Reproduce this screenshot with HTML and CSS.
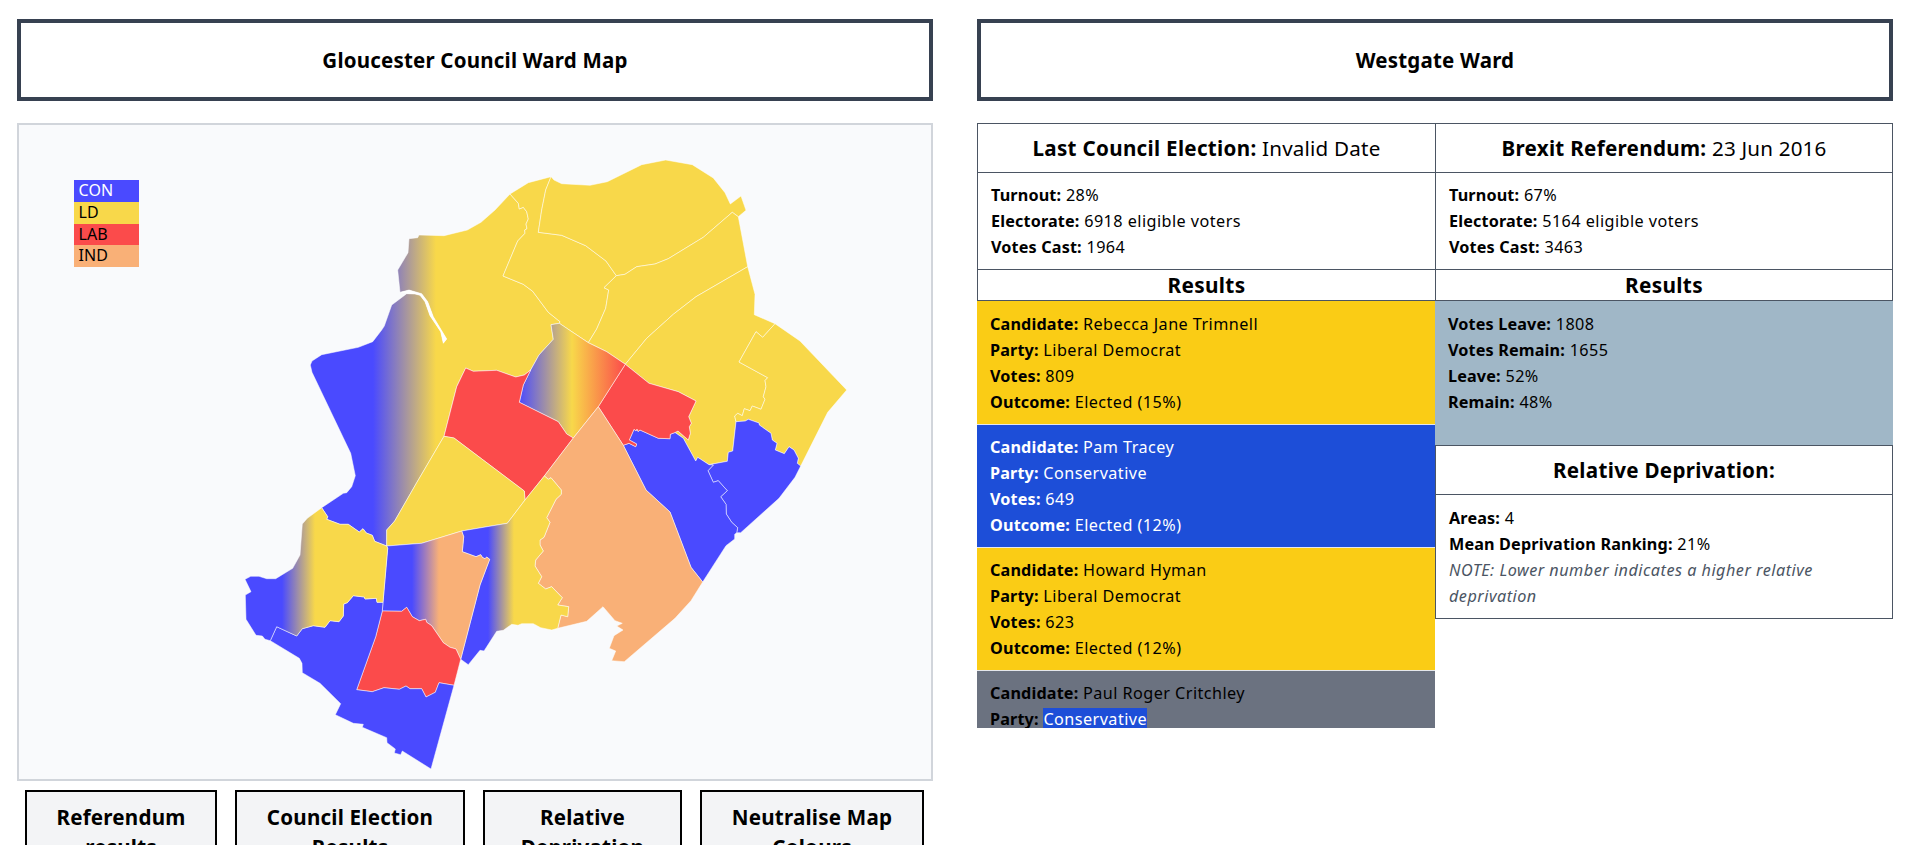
FILE: index.html
```html
<!DOCTYPE html>
<html lang="en">
<head>
<meta charset="utf-8">
<title>Gloucester Council Ward Map</title>
<link rel="stylesheet" href="styles.css">
</head>
<body>
<main class="page">
  <section class="column">
    <h1 class="title">Gloucester Council Ward Map</h1>
    <div class="map-panel">
      <svg class="map" viewBox="19 125 912 654" width="912" height="654">
        <defs>
          <linearGradient id="westgate" gradientUnits="userSpaceOnUse" x1="373" y1="0" x2="436" y2="0"><stop offset="0" stop-color="#4a4aff"/><stop offset="1" stop-color="#f8d84a"/></linearGradient>
          <linearGradient id="central" gradientUnits="userSpaceOnUse" x1="519" y1="0" x2="625" y2="0"><stop offset="0" stop-color="#4a4aff"/><stop offset=".5" stop-color="#f8d84a"/><stop offset="1" stop-color="#fb4b4b"/></linearGradient>
          <linearGradient id="west" gradientUnits="userSpaceOnUse" x1="282" y1="0" x2="315" y2="0"><stop offset="0" stop-color="#4a4aff"/><stop offset="1" stop-color="#f8d84a"/></linearGradient>
          <linearGradient id="south" gradientUnits="userSpaceOnUse" x1="412" y1="0" x2="439" y2="0"><stop offset="0" stop-color="#4a4aff"/><stop offset="1" stop-color="#f9b077"/></linearGradient>
          <linearGradient id="mid" gradientUnits="userSpaceOnUse" x1="488" y1="0" x2="514" y2="0"><stop offset="0" stop-color="#4a4aff"/><stop offset="1" stop-color="#f8d84a"/></linearGradient>
        </defs>
        <g class="wards">
          <path fill="url(#westgate)" d="M510 194L495 210 481 222.3 467.3 230 444 235.7 419 235 417.7 237.7 409 238.7 408 252.7 397.7 270 400 292.3 409 290 421.7 293.7 427.7 301.7 433.3 316.7 441.7 330.7 446.7 339 443.3 343.3 440.7 331.7 430 315.7 425 301.7 420 295.3 415 294 406.7 293.7 391.7 305 384.3 326 381.7 330 372.7 341.7 358.3 347.3 321.7 354.7 312 361 310.3 365 312 372.3 350.7 453.3 355.3 475.7 351.7 486.7 346.7 492.7 343.3 493.3 321.7 507.7 327.7 516.7 326.7 519.3 340 524.3 348.3 524.3 359.3 532 363 528.7 366.3 533 372.3 535.3 374.7 541.3 386.7 546 386.7 530 394.7 521 416.7 482.7 444 436.3 456.7 386.7 465.7 368 473.3 371.3 496.7 370.3 515.7 377 524.3 375 530.7 370 539 355 553.3 339.3 551 324.7 559.3 323.3 560 321.7 548.3 312.3 532.7 291.3 523.3 284.3 503 276 517.7 241 525 233.3 524.7 230 527 228.7 526 224 528.3 219 526.7 211.7 523.3 207.3 519.3 209 518.3 203.3Z"/>
          <path fill="#f8d84a" d="M510 194L528.3 182.7 551 176.7 545.7 190 541.7 210 538.3 232.3 561.7 235.3 585.7 245.7 606 261 616.3 275.7 604 287.7 608.7 290 605.7 308.3 596.7 329 588.3 342.7 559.3 323.3 560 321.7 548.3 312.3 532.7 291.3 523.3 284.3 503 276 517.7 241 525 233.3 524.7 230 527 228.7 526 224 528.3 219 526.7 211.7 523.3 207.3 519.3 209 518.3 203.3Z"/>
          <path fill="#f8d84a" d="M551 176.7L554 180 561.7 183.7 590 185.3 607.3 181.7 641.7 164.7 665.7 160 692.3 164.7 713.3 178 725 192.7 730.3 204 741 196 746 210.3 738.3 216.7 732.3 212.3 703.3 237.3 668.3 258.7 655 264 636.7 266.7 625 274.3 616.3 275.7 606 261 585.7 245.7 561.7 235.3 538.3 232.3 541.7 210 545.7 190Z"/>
          <path fill="#f8d84a" d="M732.3 212.3L738.3 216.7 747.7 266.7 696 296.7 673.3 314.3 646.7 338.3 625.3 364.3 606.7 351.7 588.3 342.7 596.7 329 605.7 308.3 608.7 290 604 287.7 616.3 275.7 625 274.3 636.7 266.7 655 264 668.3 258.7 703.3 237.3Z"/>
          <path fill="#f8d84a" d="M747.7 266.7L755 294.3 754.3 314.7 775 323.7 762.7 337.3 756 331.7 739 362 767.7 377.7 765 380.5 766 386.7 763.3 396.7 765 399.3 761 409.3 752.3 406 750 410.7 744.3 408.7 742.3 415.7 737.7 413.3 734.7 416 736 421.7 732.7 451 728.3 452.3 727.3 461.3 709 464.7 697.7 457.3 695.7 461 683.3 438.3 675 432.5 678 431 688.3 440 690.3 433.3 689.3 426.7 691.3 423.3 688.7 416.7 696 401 678.3 391.7 649 383.3 625.3 364.3 646.7 338.3 673.3 314.3 696 296.7Z"/>
          <path fill="#f8d84a" d="M775 323.7L800 341 846.7 390 827.7 412.3 800.7 466 797.3 463.3 798.3 458.3 794 450 789 446.7 784.3 453.7 775.3 450 777 443.3 772.3 440 771 433.3 759.3 425 759 423 748.3 419.3 745.3 421 736 421.7 734.7 416 737.7 413.3 742.3 415.7 744.3 408.7 750 410.7 752.3 406 761 409.3 765 399.3 763.3 396.7 766 386.7 765 380.5 767.7 377.7 739 362 756 331.7 762.7 337.3Z"/>
          <path fill="#4a4aff" d="M736 421.7L745.3 421 748.3 419.3 759 423 759.3 425 771 433.3 772.3 440 777 443.3 775.3 450 784.3 453.7 789 446.7 794 450 798.3 458.3 797.3 463.3 800.7 466 795 477.3 779 498.3 740.7 532.7 736.7 532.7 737.7 527.7 731.7 522.3 726.3 514 726 504.3 720.7 496.7 727.3 490.7 718.3 480.7 713.3 482.3 708 470.7 713.3 465 709 464.7 727.3 461.3 728.3 452.3 732.7 451Z"/>
          <path fill="#4a4aff" d="M709 464.7L713.3 465 708 470.7 713.3 482.3 718.3 480.7 727.3 490.7 720.7 496.7 726 504.3 726.3 514 731.7 522.3 737.7 527.7 736.7 532.7 734.7 534.3 734.7 539 726 545.7 702.7 582 691 567.3 670 512 646 490 623.3 445.3 629 443.3 635.7 446.7 636.7 444 629.3 440 634 429.3 636 431 637 429 638 431.5 640 430 658.3 438.3 670 438.7 670.3 434.3 675 432.5 683.3 438.3 695.7 461 697.7 457.3Z"/>
          <path fill="#fb4b4b" d="M625.3 364.3L649 383.3 678.3 391.7 696 401 688.7 416.7 691.3 423.3 689.3 426.7 690.3 433.3 688.3 440 678 431 675 432.5 670.3 434.3 670 438.7 658.3 438.3 640 430 638 431.5 637 429 636 431 634 429.3 629.3 440 636.7 444 635.7 446.7 629 443.3 623.3 445.3 598.3 406.7Z"/>
          <path fill="url(#central)" d="M551 324.7L559.3 323.3 588.3 342.7 606.7 351.7 625.3 364.3 598.3 406.7 573.3 438 566.7 434 558.3 421.7 519.3 402.3 523.3 385 530.7 370 539 355 553.3 339.3Z"/>
          <path fill="#fb4b4b" d="M444 436.3L456.7 386.7 465.7 368 473.3 371.3 496.7 370.3 515.7 377 524.3 375 530.7 370 523.3 385 519.3 402.3 558.3 421.7 566.7 434 573.3 438 544.3 476 525 500 524.3 491 454 438Z"/>
          <path fill="#f8d84a" d="M444 436.3L454 438 524.3 491 525 500 507.3 523.3 461.7 531 421.7 543.3 386.7 546 386.7 530 394.7 521 416.7 482.7Z"/>
          <path fill="#f9b077" d="M598.3 406.7L623.3 445.3 646 490 670 512 691 567.3 702.7 582 691 600.7 675 618.3 624.3 661.7 611.7 660.7 615.7 651 609.3 648.3 614 635.7 623 630 616.7 626 622.3 623.3 615 620.7 603 606.7 586.7 621.3 557.7 628.3 561 615 567.7 616.7 568.7 606.7 557.7 605 562.3 597.7 551.7 586.7 545.7 589 538.3 583.3 541.7 576.7 535 566 535.7 560 543.3 551 540 545 540 540 544 537.3 550 522.3 546.7 517.7 556 499.3 561.3 494.3 561.3 490 551 477.7 548.3 479.3 544.3 476 573.3 438Z"/>
          <path fill="url(#mid)" d="M544.3 476L548.3 479.3 551 477.7 561.3 490 561.3 494.3 556 499.3 546.7 517.7 550 522.3 544 537.3 540 540 540 545 543.3 551 535.7 560 535 566 541.7 576.7 538.3 583.3 545.7 589 551.7 586.7 562.3 597.7 557.7 605 568.7 606.7 567.7 616.7 561 615 557.7 628.3 551.7 630 540.7 627.7 533.3 623.7 521.7 623.7 518 625.3 511.7 624.3 503.3 630.3 496.7 631.3 484 651 480 650.3 468.3 664.7 460.7 659.3 480 585 489.7 559.3 486.7 557 485 558.7 482.5 557.5 480.7 554.7 476 556.7 462.3 551.7 463.7 536.7 461.7 531 507.3 523.3 525 500Z"/>
          <path fill="url(#south)" d="M386.7 546L421.7 543.3 461.7 531 463.7 536.7 462.3 551.7 476 556.7 480.7 554.7 482.5 557.5 485 558.7 486.7 557 489.7 559.3 480 585 460.7 659.3 456 649 450 647.3 443.3 642.7 431.7 625.7 426.7 622.3 425.7 619.3 419.3 620.7 412.3 616.7 406.7 607.3 401.7 611.3 382.3 611 383 602.3 387.7 548.3Z"/>
          <path fill="#fb4b4b" d="M382.3 611L401.7 611.3 406.7 607.3 412.3 616.7 419.3 620.7 425.7 619.3 426.7 622.3 431.7 625.7 443.3 642.7 450 647.3 456 649 460.7 659.3 454 685.3 439 682.7 435.3 692.3 426 697 421.7 688.7 410 688.7 406 686 399.3 689.3 384 687.7 372.3 691.7 356.7 689.7 375.7 636.7Z"/>
          <path fill="#4a4aff" d="M382.3 611L383 602.3 377 602.3 376.3 598.3 365 599 364.3 597 353.3 595.7 347.3 602.7 343.7 604 343.3 616 339 621.7 330 620.7 325 627.3 313.3 625.7 302.3 628.7 296.7 636 276.7 626.7 270.3 640.7 299.3 658.3 302 663.3 302.3 672.7 320 683.3 340.7 703.7 335.3 714.7 353.3 723.3 363.3 724.3 362.3 727.3 386.7 737.7 387 742.7 395.3 749 394.3 753 400.7 754.7 402.3 751 431 769 454 685.3 439 682.7 435.3 692.3 426 697 421.7 688.7 410 688.7 406 686 399.3 689.3 384 687.7 372.3 691.7 356.7 689.7 375.7 636.7Z"/>
          <path fill="url(#west)" d="M321.7 507.7L327.7 516.7 326.7 519.3 340 524.3 348.3 524.3 359.3 532 363 528.7 366.3 533 372.3 535.3 374.7 541.3 386.7 546 387.7 548.3 383 602.3 377 602.3 376.3 598.3 365 599 364.3 597 353.3 595.7 347.3 602.7 343.7 604 343.3 616 339 621.7 330 620.7 325 627.3 313.3 625.7 302.3 628.7 296.7 636 276.7 626.7 270.3 640.7 265 639.3 262.3 636 256 635.3 246 619.3 245.3 595 251 591.7 245 579.3 250.7 576.3 259 576.3 266.7 578.7 275.7 578.7 292.7 568.3 300 555 302.3 524 307.3 518.3Z"/>
          <path class="river" d="M400 292.3L409 290 421.7 293.7 427.7 301.7 433.3 316.7 441.7 330.7 446.7 339 443.3 343.3 440.7 331.7 430 315.7 425 301.7 420 295.3 415 294 406.7 293.7Z"/>
        </g>
      </svg>
      <ul class="legend">
        <li class="legend-item con">CON</li>
        <li class="legend-item ld">LD</li>
        <li class="legend-item lab">LAB</li>
        <li class="legend-item ind">IND</li>
      </ul>
    </div>
    <div class="buttons">
      <button class="button">Referendum<br>results</button>
      <button class="button">Council Election<br>Results</button>
      <button class="button">Relative<br>Deprivation</button>
      <button class="button">Neutralise Map<br>Colours</button>
    </div>
  </section>

  <section class="column">
    <h1 class="title">Westgate Ward</h1>
    <div class="tables">
      <div class="results-column">
        <h2 class="heading"><b>Last Council Election:</b> Invalid Date</h2>
        <div class="facts">
          <p><b>Turnout:</b> 28%</p>
          <p><b>Electorate:</b> 6918 eligible voters</p>
          <p><b>Votes Cast:</b> 1964</p>
        </div>
        <h3 class="subheading">Results</h3>
        <div class="candidates">
          <div class="candidate libdem">
            <p><b>Candidate:</b> Rebecca Jane Trimnell</p>
            <p><b>Party:</b> Liberal Democrat</p>
            <p><b>Votes:</b> 809</p>
            <p><b>Outcome:</b> Elected (15%)</p>
          </div>
          <div class="candidate tory">
            <p><b>Candidate:</b> Pam Tracey</p>
            <p><b>Party:</b> Conservative</p>
            <p><b>Votes:</b> 649</p>
            <p><b>Outcome:</b> Elected (12%)</p>
          </div>
          <div class="candidate libdem">
            <p><b>Candidate:</b> Howard Hyman</p>
            <p><b>Party:</b> Liberal Democrat</p>
            <p><b>Votes:</b> 623</p>
            <p><b>Outcome:</b> Elected (12%)</p>
          </div>
          <div class="candidate lost">
            <p><b>Candidate:</b> Paul Roger Critchley</p>
            <p><b>Party:</b> <span class="party-tag">Conservative</span></p>
          </div>
        </div>
      </div>
      <div class="results-column second">
        <h2 class="heading"><b>Brexit Referendum:</b> 23 Jun 2016</h2>
        <div class="facts">
          <p><b>Turnout:</b> 67%</p>
          <p><b>Electorate:</b> 5164 eligible voters</p>
          <p><b>Votes Cast:</b> 3463</p>
        </div>
        <h3 class="subheading">Results</h3>
        <div class="referendum">
          <p><b>Votes Leave:</b> 1808</p>
          <p><b>Votes Remain:</b> 1655</p>
          <p><b>Leave:</b> 52%</p>
          <p><b>Remain:</b> 48%</p>
        </div>
        <h2 class="heading"><b>Relative Deprivation:</b></h2>
        <div class="facts deprivation">
          <p><b>Areas:</b> 4</p>
          <p><b>Mean Deprivation Ranking:</b> 21%</p>
          <p class="note">NOTE: Lower number indicates a higher relative<br>deprivation</p>
        </div>
      </div>
    </div>
  </section>
</main>
</body>
</html>
```
FILE: styles.css
```css
* { box-sizing: border-box; margin: 0; padding: 0; }
html, body { height: 845px; overflow: hidden; }
body { background: #fff; color: #000; font: 16.2px/26px "Noto Sans", "Open Sans", sans-serif; letter-spacing: .45px; }
b { letter-spacing: .15px; }
.page { display: grid; grid-template-columns: 916px 916px; column-gap: 44px; padding: 19px 17px 0; }
.title { height: 82px; margin-bottom: 22px; border: 4px solid #374151; font-size: 20.5px; line-height: 75px; font-weight: 700; letter-spacing: .2px; text-align: center; }

.map-panel { position: relative; height: 658px; border: 2px solid #d1d5db; background: #f9fafc; }
.map { display: block; }
.wards path { stroke: rgba(255, 255, 255, .5); stroke-width: 1; stroke-linejoin: round; }
.wards .river { fill: #fff; stroke: none; }
.legend { position: absolute; left: 54.5px; top: 55px; width: 65px; list-style: none; font-size: 16px; letter-spacing: .1px; }
.legend-item { height: 21.75px; padding-left: 5px; line-height: 21px; }
.con { background: #4a4aff; color: #fff; }
.ld { background: #f8d84a; }
.lab { background: #fb4b4b; }
.ind { background: #f9b077; }

.buttons { display: grid; grid-template-columns: 192px 230px 199px 224px; column-gap: 18px; padding: 9px 8px 0; }
.button { height: 84px; border: 2px solid #000; background: #f3f4f6; color: #000; font: 700 20.6px/30px "Noto Sans", "Open Sans", sans-serif; letter-spacing: .2px; text-align: center; }

.tables { display: grid; grid-template-columns: 458px 458px; align-items: start; }
.heading, .facts, .subheading { border: 1px solid #4b5563; border-bottom: 0; border-right: 0; }
.second .heading, .second .facts, .second .subheading { border-right: 1px solid #4b5563; }
.heading { height: 49px; font-size: 20.6px; line-height: 48px; font-weight: 400; letter-spacing: .2px; text-align: center; }
.heading b { letter-spacing: .3px; }
.facts { height: 97px; padding: 9px 13px; }
.subheading { height: 32px; border-bottom: 1px solid #4b5563; font-size: 20.8px; line-height: 31px; letter-spacing: .3px; text-align: center; }
.candidates { height: 427px; overflow: hidden; }
.candidate { height: 123px; padding: 9px 13px 0; border-bottom: 1px solid #e5e7eb; }
.candidate:first-child { height: 124px; padding-top: 10px; }
.libdem { background: #facc15; }
.tory { background: #1d4ed8; color: #fff; }
.lost { background: #6b7280; }
.party-tag { background: #1d4ed8; color: #fff; }
.referendum { height: 144px; padding: 10px 13px; background: #a0b7c7; }
.facts.deprivation { height: 125px; padding-top: 10px; border-bottom: 1px solid #4b5563; }
.note { color: #4b5563; font-style: italic; letter-spacing: .5px; }
```
